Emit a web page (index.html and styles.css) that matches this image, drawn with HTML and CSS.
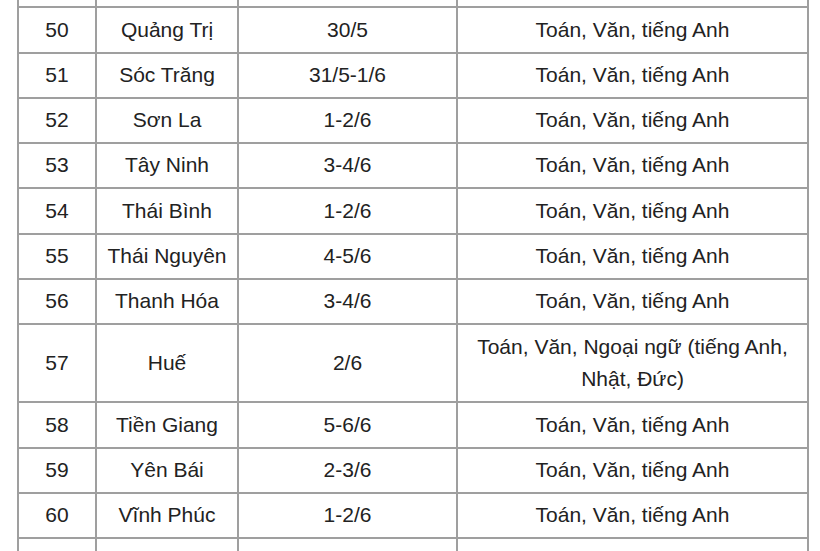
FILE: index.html
```html
<!DOCTYPE html>
<html lang="vi">
<head>
<meta charset="utf-8">
<title>Lịch thi vào lớp 10</title>
<link rel="stylesheet" href="styles.css">
</head>
<body>
<div class="wrap">
<table class="exam">
<colgroup>
<col class="c-no"><col class="c-prov"><col class="c-date"><col class="c-subj">
</colgroup>
<tbody>
<tr class="prev"><td></td><td></td><td></td><td></td></tr>
<tr><td>50</td><td>Quảng Trị</td><td>30/5</td><td>Toán, Văn, tiếng Anh</td></tr>
<tr><td>51</td><td>Sóc Trăng</td><td>31/5-1/6</td><td>Toán, Văn, tiếng Anh</td></tr>
<tr><td>52</td><td>Sơn La</td><td>1-2/6</td><td>Toán, Văn, tiếng Anh</td></tr>
<tr><td>53</td><td>Tây Ninh</td><td>3-4/6</td><td>Toán, Văn, tiếng Anh</td></tr>
<tr><td>54</td><td>Thái Bình</td><td>1-2/6</td><td>Toán, Văn, tiếng Anh</td></tr>
<tr><td>55</td><td>Thái Nguyên</td><td>4-5/6</td><td>Toán, Văn, tiếng Anh</td></tr>
<tr><td>56</td><td>Thanh Hóa</td><td>3-4/6</td><td>Toán, Văn, tiếng Anh</td></tr>
<tr><td>57</td><td>Huế</td><td>2/6</td><td>Toán, Văn, Ngoại ngữ (tiếng Anh, Nhật, Đức)</td></tr>
<tr><td>58</td><td>Tiền Giang</td><td>5-6/6</td><td>Toán, Văn, tiếng Anh</td></tr>
<tr><td>59</td><td>Yên Bái</td><td>2-3/6</td><td>Toán, Văn, tiếng Anh</td></tr>
<tr><td>60</td><td>Vĩnh Phúc</td><td>1-2/6</td><td>Toán, Văn, tiếng Anh</td></tr>
<tr><td></td><td></td><td></td><td>Tổ hợp Toán, Văn, Anh</td></tr>
</tbody>
</table>
</div>
</body>
</html>
```
FILE: styles.css
```css
html, body {
  margin: 0;
  padding: 0;
  background: #ffffff;
  overflow: hidden;
}
.wrap {
  padding-left: 17px;
  height: 551px;
  overflow: hidden;
}
.exam {
  margin-top: -39px;
  border-collapse: collapse;
  table-layout: fixed;
  width: 792px;
  font-family: "Liberation Sans", Arial, sans-serif;
  font-size: 21px;
  line-height: 32.7px;
  color: #222222;
}
.c-no { width: 78px; }
.c-prov { width: 142px; }
.c-date { width: 219px; }
.c-subj { width: 351px; }
.exam td {
  border: 2px solid #9f9f9f;
  padding: 5.3px 8px;
  text-align: center;
  vertical-align: middle;
}
.exam .prev td {
  height: 32.7px;
}
```
